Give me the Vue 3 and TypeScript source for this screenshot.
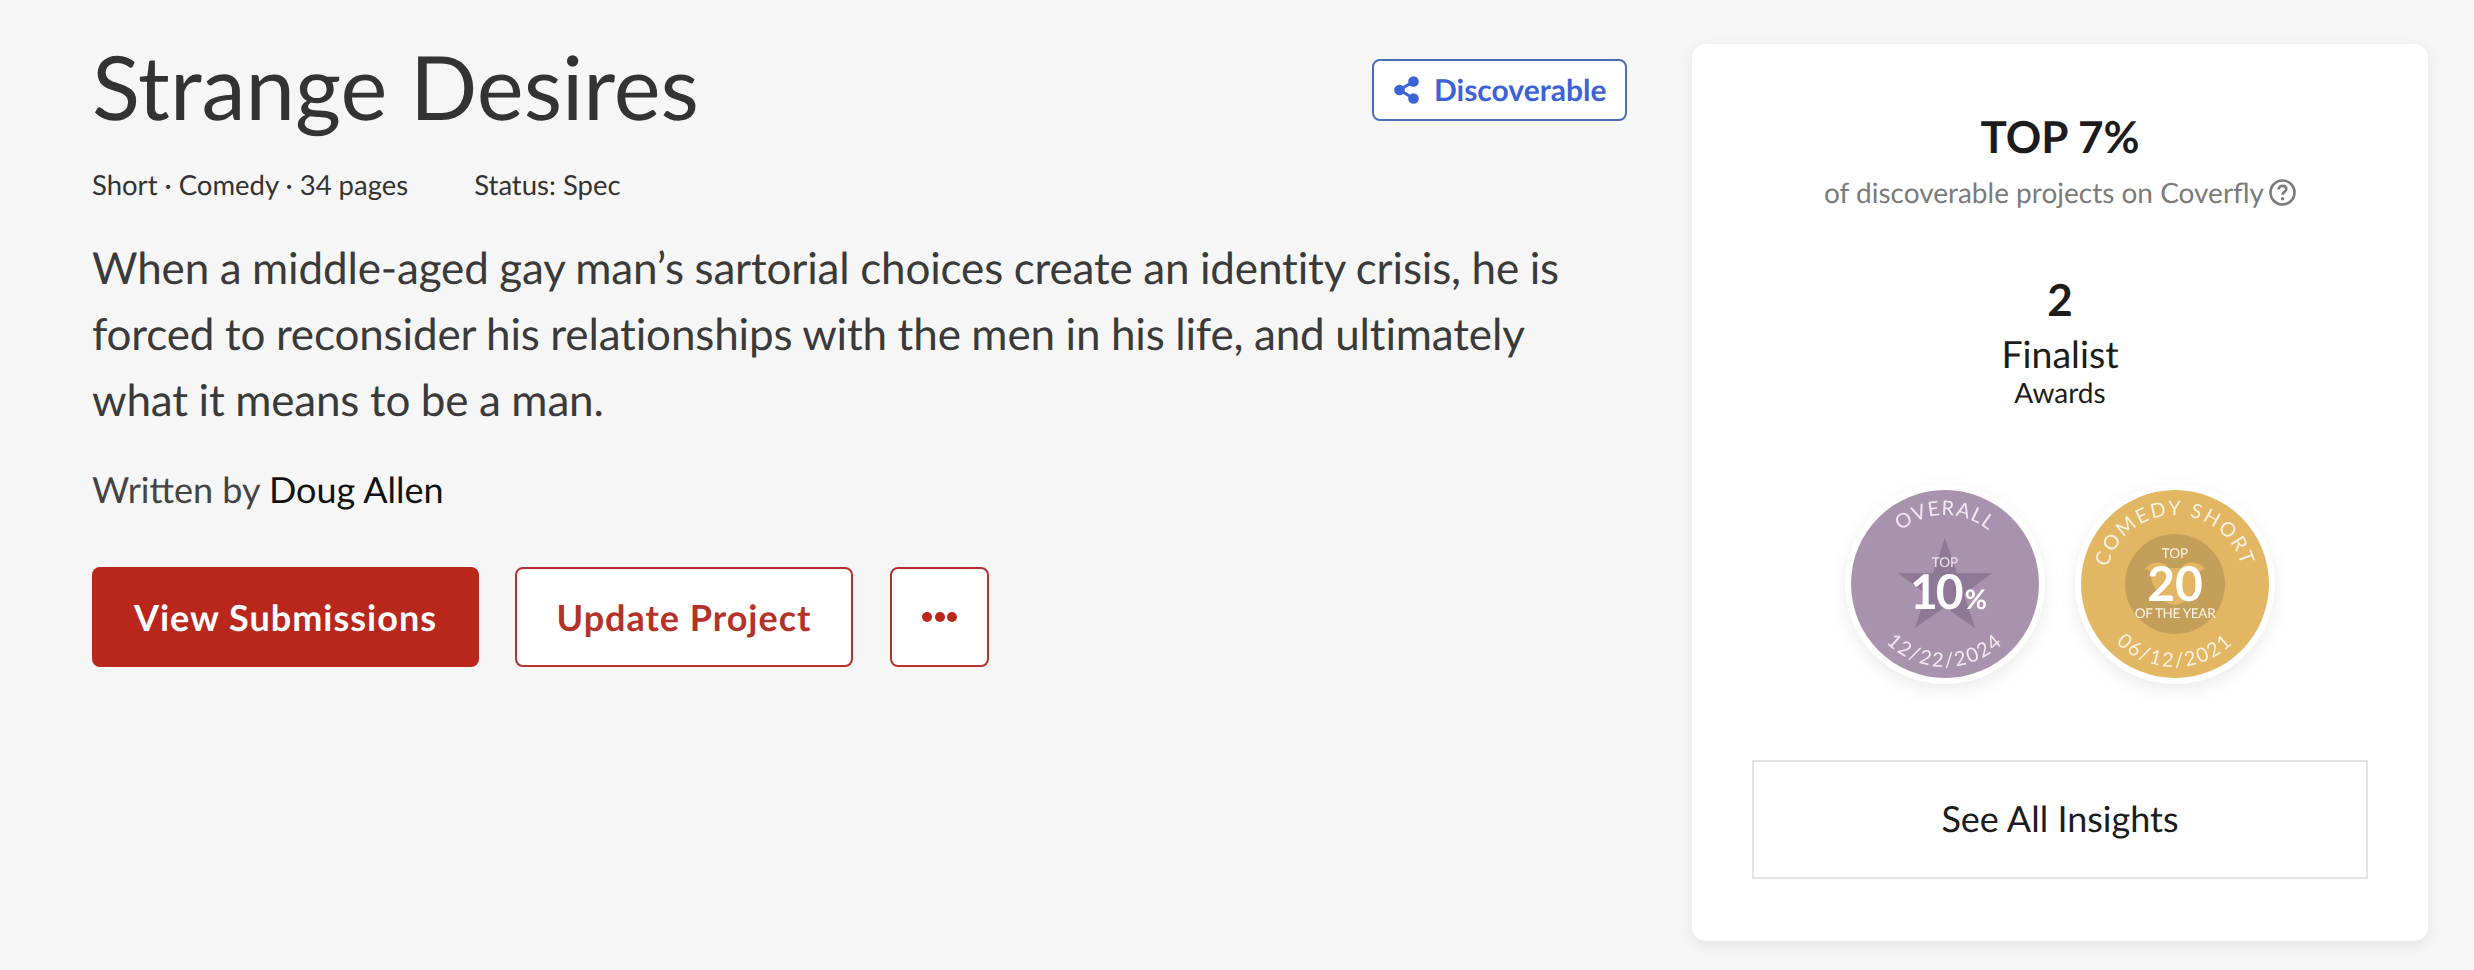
<script setup lang="ts">
const meta = ['Short · Comedy · 34 pages', 'Status: Spec']
</script>

<template>
  <div class="page">
    <main class="info">
      <header class="head">
        <h1 class="title">Strange Desires</h1>
        <button class="tag">
          <svg class="share" viewBox="0 0 25 28" width="25" height="28" aria-hidden="true">
            <path d="M19.5 5.5 5.5 14l14 8.5" fill="none" stroke="#3b62d6" stroke-width="3" />
            <circle cx="19.5" cy="5.5" r="5.3" fill="#3b62d6" />
            <circle cx="5.5" cy="14" r="5.3" fill="#3b62d6" />
            <circle cx="19.5" cy="22.5" r="5.3" fill="#3b62d6" />
          </svg>
          Discoverable
        </button>
      </header>
      <div class="meta">
        <span v-for="m in meta" :key="m">{{ m }}</span>
      </div>
      <p class="logline">When a middle-aged gay man’s sartorial choices create an identity crisis, he is forced to reconsider his relationships with the men in his life, and ultimately what it means to be a man.</p>
      <p class="writer">Written by <span class="name">Doug Allen</span></p>
      <div class="actions">
        <button class="btn solid">View Submissions</button>
        <button class="btn outline">Update Project</button>
        <button class="btn outline more" aria-label="More">
          <i></i><i></i><i></i>
        </button>
      </div>
    </main>
    <aside class="card">
      <div class="rank">TOP 7%</div>
      <div class="sub">
        of discoverable projects on Coverfly
        <svg class="help" viewBox="0 0 27 27" width="27" height="27" aria-hidden="true">
          <circle cx="13.5" cy="13.5" r="12" fill="none" stroke="#7b7b7b" stroke-width="2.6" />
          <path d="M9.6 10.6c0-2.3 1.7-3.7 3.9-3.7s3.8 1.3 3.8 3.2c0 2.8-3.8 2.8-3.8 5.6" fill="none" stroke="#7b7b7b" stroke-width="2.6" />
          <circle cx="13.5" cy="19.8" r="1.7" fill="#7b7b7b" />
        </svg>
      </div>
      <div class="count">2</div>
      <div class="finalist">Finalist</div>
      <div class="awards">Awards</div>
      <div class="badges">
        <svg class="badge" viewBox="0 0 200 200" width="200" height="200">
          <defs>
            <path id="arcTopA" d="M31 100a69 69 0 0 1 138 0" />
            <path id="arcBotA" d="M17 100a83 83 0 0 0 166 0" />
          </defs>
          <circle cx="100" cy="100" r="100" fill="#fff" />
          <circle cx="100" cy="100" r="94" fill="#a992ad" />
          <path d="M100 54 112 89H147L119 110 130 144 100 123 70 144 81 110 53 89H88Z" fill="#8f7895" />
          <text class="arc" fill="#f1eaf2" letter-spacing="1.2"><textPath href="#arcTopA" startOffset="50%" text-anchor="middle">OVERALL</textPath></text>
          <text class="arc" fill="#f1eaf2" letter-spacing="2"><textPath href="#arcBotA" startOffset="50%" text-anchor="middle">12/22/2024</textPath></text>
          <text class="small" x="100" y="83" text-anchor="middle" fill="#efe8f0">TOP</text>
          <text class="big" x="65" y="125" fill="#fff" letter-spacing="-2">10<tspan class="pct" dx="3" letter-spacing="0">%</tspan></text>
        </svg>
        <svg class="badge" viewBox="0 0 200 200" width="200" height="200">
          <defs>
            <path id="arcTopB" d="M31 100a69 69 0 0 1 138 0" />
            <path id="arcBotB" d="M17 100a83 83 0 0 0 166 0" />
          </defs>
          <circle cx="100" cy="100" r="100" fill="#fff" />
          <circle cx="100" cy="100" r="94" fill="#e2b662" />
          <circle cx="100" cy="100" r="50" fill="#c39f59" />
          <path d="M70 85C76 77 88 76 94 84H106C112 76 124 77 130 85L125 87C124 102 114 120 100 121 86 120 76 102 75 87Z" fill="#e2b662" />
          <text class="arc" fill="#faf1df" letter-spacing="2.2"><textPath href="#arcTopB" startOffset="50%" text-anchor="middle">COMEDY SHORT</textPath></text>
          <text class="arc" fill="#faf1df" letter-spacing="2"><textPath href="#arcBotB" startOffset="50%" text-anchor="middle">06/12/2021</textPath></text>
          <text class="small" x="100" y="74" text-anchor="middle" fill="#fbf4e6">TOP</text>
          <text class="big" x="100" y="117" text-anchor="middle" fill="#fff">20</text>
          <text class="small" x="100" y="134" text-anchor="middle" fill="#fbf4e6" letter-spacing="-0.3">OF THE YEAR</text>
        </svg>
      </div>
      <button class="insights">See All Insights</button>
    </aside>
  </div>
</template>

<style>
html, body { margin: 0; background: #f6f6f6; }
</style>

<style scoped>
.page {
  display: flex;
  align-items: flex-start;
  gap: 65px;
  height: 970px;
  box-sizing: border-box;
  padding: 44px 46px 0 92px;
  font-family: Lato, "Liberation Sans", sans-serif;
  text-rendering: geometricPrecision;
  color: #333;
  overflow: hidden;
}
.info { width: 1535px; flex: none; }
.head { display: flex; justify-content: space-between; align-items: flex-start; }
.title { margin: 0; font-size: 88.7px; line-height: 84px; font-weight: 400; color: #333; }
.tag {
  display: flex; align-items: center; gap: 15px;
  margin-top: 15px; width: 255px; height: 62px; padding: 0 0 0 20px;
  background: #fff; border: 2px solid #4a6db8; border-radius: 8px;
  color: #3b62d6; font: 700 30px Lato, sans-serif; box-sizing: border-box; white-space: nowrap;
  text-rendering: geometricPrecision;
}
.share { flex: none; }
.meta { display: flex; gap: 66px; margin-top: 40px; font-size: 27.5px; line-height: 34px; color: #333; }
.logline { margin: 33px 0 0; width: 1500px; font-size: 44px; line-height: 66px; letter-spacing: -0.15px; word-spacing: -0.5px; color: #3a3a3a; }
.writer { margin: 34px 0 0; font-size: 36px; line-height: 44px; color: #444; }
.name { color: #111; }
.actions { display: flex; gap: 36px; margin-top: 56px; }
.btn {
  height: 100px; border-radius: 8px; font: 700 36px Lato, sans-serif; letter-spacing: 1px;
  box-sizing: border-box; display: flex; align-items: center; justify-content: center; gap: 2.5px;
  text-rendering: geometricPrecision;
}
.solid { width: 387px; background: #b9261b; border: 0; color: #fff; }
.outline { width: 338px; background: #fff; border: 2px solid #b3322a; color: #b3322a; }
.more { width: 99px; margin-left: 1px; }
.more i { width: 10px; height: 10px; border-radius: 50%; background: #b9261b; }
.card {
  width: 736px; height: 897px; flex: none; box-sizing: border-box;
  padding: 65px 60px 0; background: #fff; border-radius: 14px;
  box-shadow: 0 4px 14px rgba(0, 0, 0, 0.08);
  text-align: center; color: #1c1c1c;
}
.rank { font-size: 44px; line-height: 56px; font-weight: 700; }
.sub { display: flex; justify-content: center; align-items: center; gap: 5px; margin-top: 7px; font-size: 28px; line-height: 40px; color: #7b7b7b; }
.help { flex: none; }
.count { margin-top: 60px; font-size: 44px; line-height: 56px; font-weight: 700; }
.finalist { margin-top: 4px; font-size: 37.5px; line-height: 44px; }
.awards { font-size: 28px; line-height: 32px; }
.badges { display: flex; justify-content: center; gap: 30px; margin-top: 76px; }
.badge { flex: none; filter: drop-shadow(0 6px 8px rgba(0, 0, 0, 0.08)); overflow: visible; }
.arc { font-size: 20px; font-family: Lato, sans-serif; }
.small { font-size: 13.5px; font-family: Lato, sans-serif; }
.big { font-size: 48px; font-weight: 700; font-family: Lato, sans-serif; }
.pct { font-size: 27px; }
.insights {
  display: block; width: 616px; height: 119px; margin-top: 76px; padding-bottom: 4px; background: #fff;
  border: 2px solid #e3e3e3; font: 400 36px Lato, sans-serif; color: #1c1c1c;
  text-rendering: geometricPrecision;
}
</style>
